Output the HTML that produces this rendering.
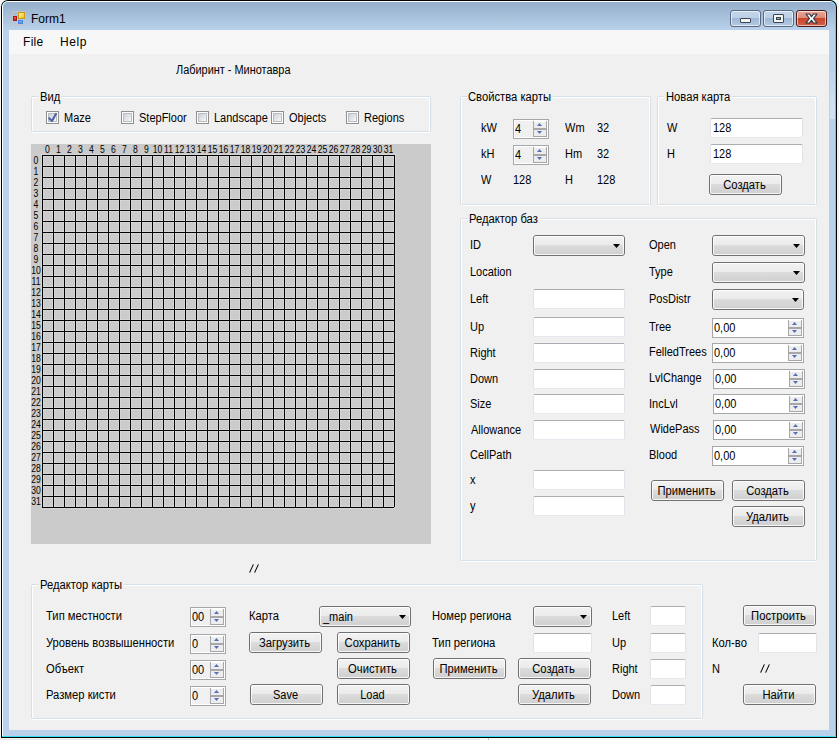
<!DOCTYPE html><html><head><meta charset="utf-8"><style>
html,body{margin:0;padding:0;}
body{width:839px;height:740px;position:relative;overflow:hidden;background:#f4f4f4;font-family:'Liberation Sans',sans-serif;}
.ab{position:absolute;}
.l{position:absolute;font-size:12px;line-height:14px;white-space:pre;color:#000;transform:scaleX(0.9167);transform-origin:0 0;}
.c{text-align:center;transform-origin:50% 0;}
.tb{position:absolute;box-sizing:border-box;background:#fff;border:1px solid #e2e3ea;border-top-color:#abadb3;border-bottom-color:#e3e9ef;border-radius:2px;}
.btn{position:absolute;box-sizing:border-box;border:1px solid #707070;border-radius:3px;background:linear-gradient(#f2f2f2 0%,#ebebeb 46%,#dddddd 46%,#cfcfcf 100%);}
.bi{position:absolute;left:0;top:0;right:0;bottom:0;border:1px solid rgba(255,255,255,0.8);border-radius:2px;}
.nud{position:absolute;box-sizing:border-box;border:1px solid #a5a7ab;box-shadow:inset 0 0 0 1px #fff;}
.spin{position:absolute;box-sizing:border-box;width:14px;height:16px;border:1px solid #a5a7ab;border-top:none;background:linear-gradient(#fff 0,#fff 1px,#ededed 1px,#ededed 7px,#a5a7ab 7px,#a5a7ab 9px,#ededed 9px,#ededed 15px,#fff 15px);}
.cb{position:absolute;box-sizing:border-box;width:13px;height:13px;border:1px solid #8f8f8f;background:#fff;}
.cbi{position:absolute;left:1px;top:1px;width:9px;height:9px;box-sizing:border-box;border:1px solid #b9bdc4;background:linear-gradient(135deg,#cdd1d8,#f7f7f7);}
</style></head><body>

<div class="ab" style="left:1px;top:0;width:836px;height:738px;background:#000;border-radius:7px 7px 0 0"></div>
<div class="ab" style="left:2px;top:1px;width:834px;height:736px;background:#33e0f0;border-radius:6px 6px 0 0"></div>
<div class="ab" style="left:2px;top:1px;width:833px;height:735px;background:#fff;border-radius:6px 6px 0 0"></div>
<div class="ab" style="left:3px;top:2px;width:832px;height:734px;background:#b9d1ea;border-radius:5px 5px 0 0"></div>
<div class="ab" style="left:3px;top:2px;width:832px;height:28px;background:linear-gradient(#94aecb,#b9d1ea);border-radius:5px 5px 0 0"></div>
<div class="ab" style="left:830px;top:72px;width:5px;height:47px;background:linear-gradient(#bcd3ea,#cddff2 60%,#d0e1f3)"></div>
<div class="ab" style="left:0;top:739px;width:839px;height:1px;background:#e6e6e6"></div>
<div class="ab" style="left:480px;top:738px;width:359px;height:2px;background:#fff"></div><div class="ab" style="left:488px;top:738px;width:1px;height:2px;background:#c4c4c4"></div>
<div class="ab" style="left:9px;top:30px;width:820px;height:700px;background:#f0f0f0"></div>
<div class="ab" style="left:9px;top:30px;width:820px;height:24px;background:#f7f7f7"></div>
<div class="ab" style="left:23px;top:35px;font-size:12px;line-height:14px;white-space:pre;letter-spacing:0.3px">File</div>
<div class="ab" style="left:60px;top:35px;font-size:12px;line-height:14px;white-space:pre;letter-spacing:0.6px">Help</div>
<div class="ab" style="left:31px;top:12px;font-size:12px;line-height:14px;white-space:pre;color:#000">Form1</div>
<svg class="ab" style="left:12px;top:11px" width="14" height="14">
<defs><linearGradient id="gy" x1="0" y1="0" x2="1" y2="1"><stop offset="0" stop-color="#fff4b0"/><stop offset="1" stop-color="#f0b818"/></linearGradient>
<linearGradient id="gr" x1="0" y1="0" x2="0" y2="1"><stop offset="0" stop-color="#f07070"/><stop offset="1" stop-color="#c01818"/></linearGradient>
<linearGradient id="gb" x1="0" y1="0" x2="0" y2="1"><stop offset="0" stop-color="#9cc4ff"/><stop offset="1" stop-color="#3a7ee0"/></linearGradient></defs>
<rect x="0.5" y="0.5" width="13" height="13" fill="none" stroke="#c4c4c4"/>
<path d="M5.5 1V13M1 8.5H13" stroke="#d0d0d0" stroke-dasharray="1 1"/>
<rect x="6.5" y="1.5" width="6" height="6" fill="url(#gy)" stroke="#c89a10"/>
<rect x="1.5" y="5.5" width="3" height="4" fill="url(#gr)" stroke="#a81818"/>
<rect x="6.5" y="9.5" width="4" height="3" fill="url(#gb)" stroke="#4a86e0"/>
</svg>
<div class="ab" style="left:730px;top:10px;width:31px;height:17px;box-sizing:border-box;border:1px solid #586a80;border-radius:3px;background:linear-gradient(#c5d6ea 0%,#bccfe6 45%,#9fb8d6 50%,#b5cae2 100%);box-shadow:inset 0 0 0 1px rgba(255,255,255,0.6)"></div>
<div class="ab" style="left:763px;top:10px;width:31px;height:17px;box-sizing:border-box;border:1px solid #586a80;border-radius:3px;background:linear-gradient(#c5d6ea 0%,#bccfe6 45%,#9fb8d6 50%,#b5cae2 100%);box-shadow:inset 0 0 0 1px rgba(255,255,255,0.6)"></div>
<div class="ab" style="left:796px;top:10px;width:31px;height:17px;box-sizing:border-box;border:1px solid #4a1a1a;border-radius:3px;background:linear-gradient(#eaa898 0%,#dc8a78 45%,#c8462a 50%,#d0604a 100%);box-shadow:inset 0 0 0 1px rgba(255,255,255,0.6)"></div>
<div class="ab" style="left:740px;top:18px;width:11px;height:5px;box-sizing:border-box;border:1px solid #3a4656;border-radius:1px;background:#f4f4f0"></div>
<div class="ab" style="left:773px;top:14px;width:11px;height:9px;box-sizing:border-box;border:1px solid #3a4656;border-radius:1px;background:#f4f4f0"></div>
<div class="ab" style="left:776px;top:17px;width:5px;height:3px;box-sizing:border-box;border:1px solid #3a4656;background:#8aa4c4"></div>
<svg class="ab" style="left:805px;top:13px" width="13" height="11"><polygon points="1,1 4.5,1 6.5,3.6 8.5,1 12,1 8.6,5.5 12,10 8.5,10 6.5,7.4 4.5,10 1,10 4.4,5.5" fill="#f8f8f8" stroke="#2e3440" stroke-width="1.2" stroke-linejoin="round"/></svg>
<div class="l" style="left:176px;top:63px;transform:scaleX(0.91);">Лабиринт - Минотавра</div>
<div class="ab" style="left:32px;top:96px;width:398px;height:1px;background:#d5dfe5"></div>
<div class="ab" style="left:32px;top:97px;width:397px;height:1px;background:#fff"></div>
<div class="ab" style="left:31px;top:97px;width:1px;height:34px;background:#d5dfe5"></div>
<div class="ab" style="left:32px;top:97px;width:1px;height:34px;background:#fff"></div>
<div class="ab" style="left:430px;top:97px;width:1px;height:34px;background:#d5dfe5"></div>
<div class="ab" style="left:429px;top:97px;width:1px;height:34px;background:#fff"></div>
<div class="ab" style="left:32px;top:131px;width:398px;height:1px;background:#d5dfe5"></div>
<div class="ab" style="left:32px;top:132px;width:398px;height:1px;background:#fff"></div>
<div class="ab" style="left:38px;top:96px;width:23px;height:2px;background:#f0f0f0"></div>
<div class="l" style="left:40px;top:90px;transform:scaleX(0.935);">Вид</div>
<div class="cb" style="left:46px;top:111px"><div class="cbi"></div></div>
<svg class="ab" style="left:46px;top:111px" width="13" height="13"><path d="M3.2 7.2L6 10L10 2.8" stroke="#4a5fa8" stroke-width="2" fill="none" stroke-linecap="round" stroke-linejoin="round"/></svg>
<div class="l" style="left:64px;top:111px;">Maze</div>
<div class="cb" style="left:121px;top:111px"><div class="cbi"></div></div>
<div class="l" style="left:139px;top:111px;">StepFloor</div>
<div class="cb" style="left:196px;top:111px"><div class="cbi"></div></div>
<div class="l" style="left:214px;top:111px;">Landscape</div>
<div class="cb" style="left:271px;top:111px"><div class="cbi"></div></div>
<div class="l" style="left:289px;top:111px;">Objects</div>
<div class="cb" style="left:346px;top:111px"><div class="cbi"></div></div>
<div class="l" style="left:364px;top:111px;">Regions</div>
<svg class="ab" style="left:31px;top:144px" width="400" height="400"><rect width="400" height="400" fill="#cbcbcb"/><rect x="10" y="10" width="1" height="354" fill="#fff" fill-opacity="0.2"/><rect x="12" y="10" width="1" height="354" fill="#fff" fill-opacity="0.2"/><rect x="10" y="10" width="354" height="1" fill="#fff" fill-opacity="0.2"/><rect x="10" y="12" width="354" height="1" fill="#fff" fill-opacity="0.2"/><rect x="21" y="10" width="1" height="354" fill="#fff" fill-opacity="0.2"/><rect x="23" y="10" width="1" height="354" fill="#fff" fill-opacity="0.2"/><rect x="10" y="21" width="354" height="1" fill="#fff" fill-opacity="0.2"/><rect x="10" y="23" width="354" height="1" fill="#fff" fill-opacity="0.2"/><rect x="32" y="10" width="1" height="354" fill="#fff" fill-opacity="0.2"/><rect x="34" y="10" width="1" height="354" fill="#fff" fill-opacity="0.2"/><rect x="10" y="32" width="354" height="1" fill="#fff" fill-opacity="0.2"/><rect x="10" y="34" width="354" height="1" fill="#fff" fill-opacity="0.2"/><rect x="43" y="10" width="1" height="354" fill="#fff" fill-opacity="0.2"/><rect x="45" y="10" width="1" height="354" fill="#fff" fill-opacity="0.2"/><rect x="10" y="43" width="354" height="1" fill="#fff" fill-opacity="0.2"/><rect x="10" y="45" width="354" height="1" fill="#fff" fill-opacity="0.2"/><rect x="54" y="10" width="1" height="354" fill="#fff" fill-opacity="0.2"/><rect x="56" y="10" width="1" height="354" fill="#fff" fill-opacity="0.2"/><rect x="10" y="54" width="354" height="1" fill="#fff" fill-opacity="0.2"/><rect x="10" y="56" width="354" height="1" fill="#fff" fill-opacity="0.2"/><rect x="65" y="10" width="1" height="354" fill="#fff" fill-opacity="0.2"/><rect x="67" y="10" width="1" height="354" fill="#fff" fill-opacity="0.2"/><rect x="10" y="65" width="354" height="1" fill="#fff" fill-opacity="0.2"/><rect x="10" y="67" width="354" height="1" fill="#fff" fill-opacity="0.2"/><rect x="76" y="10" width="1" height="354" fill="#fff" fill-opacity="0.2"/><rect x="78" y="10" width="1" height="354" fill="#fff" fill-opacity="0.2"/><rect x="10" y="76" width="354" height="1" fill="#fff" fill-opacity="0.2"/><rect x="10" y="78" width="354" height="1" fill="#fff" fill-opacity="0.2"/><rect x="87" y="10" width="1" height="354" fill="#fff" fill-opacity="0.2"/><rect x="89" y="10" width="1" height="354" fill="#fff" fill-opacity="0.2"/><rect x="10" y="87" width="354" height="1" fill="#fff" fill-opacity="0.2"/><rect x="10" y="89" width="354" height="1" fill="#fff" fill-opacity="0.2"/><rect x="98" y="10" width="1" height="354" fill="#fff" fill-opacity="0.2"/><rect x="100" y="10" width="1" height="354" fill="#fff" fill-opacity="0.2"/><rect x="10" y="98" width="354" height="1" fill="#fff" fill-opacity="0.2"/><rect x="10" y="100" width="354" height="1" fill="#fff" fill-opacity="0.2"/><rect x="109" y="10" width="1" height="354" fill="#fff" fill-opacity="0.2"/><rect x="111" y="10" width="1" height="354" fill="#fff" fill-opacity="0.2"/><rect x="10" y="109" width="354" height="1" fill="#fff" fill-opacity="0.2"/><rect x="10" y="111" width="354" height="1" fill="#fff" fill-opacity="0.2"/><rect x="120" y="10" width="1" height="354" fill="#fff" fill-opacity="0.2"/><rect x="122" y="10" width="1" height="354" fill="#fff" fill-opacity="0.2"/><rect x="10" y="120" width="354" height="1" fill="#fff" fill-opacity="0.2"/><rect x="10" y="122" width="354" height="1" fill="#fff" fill-opacity="0.2"/><rect x="131" y="10" width="1" height="354" fill="#fff" fill-opacity="0.2"/><rect x="133" y="10" width="1" height="354" fill="#fff" fill-opacity="0.2"/><rect x="10" y="131" width="354" height="1" fill="#fff" fill-opacity="0.2"/><rect x="10" y="133" width="354" height="1" fill="#fff" fill-opacity="0.2"/><rect x="142" y="10" width="1" height="354" fill="#fff" fill-opacity="0.2"/><rect x="144" y="10" width="1" height="354" fill="#fff" fill-opacity="0.2"/><rect x="10" y="142" width="354" height="1" fill="#fff" fill-opacity="0.2"/><rect x="10" y="144" width="354" height="1" fill="#fff" fill-opacity="0.2"/><rect x="153" y="10" width="1" height="354" fill="#fff" fill-opacity="0.2"/><rect x="155" y="10" width="1" height="354" fill="#fff" fill-opacity="0.2"/><rect x="10" y="153" width="354" height="1" fill="#fff" fill-opacity="0.2"/><rect x="10" y="155" width="354" height="1" fill="#fff" fill-opacity="0.2"/><rect x="164" y="10" width="1" height="354" fill="#fff" fill-opacity="0.2"/><rect x="166" y="10" width="1" height="354" fill="#fff" fill-opacity="0.2"/><rect x="10" y="164" width="354" height="1" fill="#fff" fill-opacity="0.2"/><rect x="10" y="166" width="354" height="1" fill="#fff" fill-opacity="0.2"/><rect x="175" y="10" width="1" height="354" fill="#fff" fill-opacity="0.2"/><rect x="177" y="10" width="1" height="354" fill="#fff" fill-opacity="0.2"/><rect x="10" y="175" width="354" height="1" fill="#fff" fill-opacity="0.2"/><rect x="10" y="177" width="354" height="1" fill="#fff" fill-opacity="0.2"/><rect x="186" y="10" width="1" height="354" fill="#fff" fill-opacity="0.2"/><rect x="188" y="10" width="1" height="354" fill="#fff" fill-opacity="0.2"/><rect x="10" y="186" width="354" height="1" fill="#fff" fill-opacity="0.2"/><rect x="10" y="188" width="354" height="1" fill="#fff" fill-opacity="0.2"/><rect x="197" y="10" width="1" height="354" fill="#fff" fill-opacity="0.2"/><rect x="199" y="10" width="1" height="354" fill="#fff" fill-opacity="0.2"/><rect x="10" y="197" width="354" height="1" fill="#fff" fill-opacity="0.2"/><rect x="10" y="199" width="354" height="1" fill="#fff" fill-opacity="0.2"/><rect x="208" y="10" width="1" height="354" fill="#fff" fill-opacity="0.2"/><rect x="210" y="10" width="1" height="354" fill="#fff" fill-opacity="0.2"/><rect x="10" y="208" width="354" height="1" fill="#fff" fill-opacity="0.2"/><rect x="10" y="210" width="354" height="1" fill="#fff" fill-opacity="0.2"/><rect x="219" y="10" width="1" height="354" fill="#fff" fill-opacity="0.2"/><rect x="221" y="10" width="1" height="354" fill="#fff" fill-opacity="0.2"/><rect x="10" y="219" width="354" height="1" fill="#fff" fill-opacity="0.2"/><rect x="10" y="221" width="354" height="1" fill="#fff" fill-opacity="0.2"/><rect x="230" y="10" width="1" height="354" fill="#fff" fill-opacity="0.2"/><rect x="232" y="10" width="1" height="354" fill="#fff" fill-opacity="0.2"/><rect x="10" y="230" width="354" height="1" fill="#fff" fill-opacity="0.2"/><rect x="10" y="232" width="354" height="1" fill="#fff" fill-opacity="0.2"/><rect x="241" y="10" width="1" height="354" fill="#fff" fill-opacity="0.2"/><rect x="243" y="10" width="1" height="354" fill="#fff" fill-opacity="0.2"/><rect x="10" y="241" width="354" height="1" fill="#fff" fill-opacity="0.2"/><rect x="10" y="243" width="354" height="1" fill="#fff" fill-opacity="0.2"/><rect x="252" y="10" width="1" height="354" fill="#fff" fill-opacity="0.2"/><rect x="254" y="10" width="1" height="354" fill="#fff" fill-opacity="0.2"/><rect x="10" y="252" width="354" height="1" fill="#fff" fill-opacity="0.2"/><rect x="10" y="254" width="354" height="1" fill="#fff" fill-opacity="0.2"/><rect x="263" y="10" width="1" height="354" fill="#fff" fill-opacity="0.2"/><rect x="265" y="10" width="1" height="354" fill="#fff" fill-opacity="0.2"/><rect x="10" y="263" width="354" height="1" fill="#fff" fill-opacity="0.2"/><rect x="10" y="265" width="354" height="1" fill="#fff" fill-opacity="0.2"/><rect x="274" y="10" width="1" height="354" fill="#fff" fill-opacity="0.2"/><rect x="276" y="10" width="1" height="354" fill="#fff" fill-opacity="0.2"/><rect x="10" y="274" width="354" height="1" fill="#fff" fill-opacity="0.2"/><rect x="10" y="276" width="354" height="1" fill="#fff" fill-opacity="0.2"/><rect x="285" y="10" width="1" height="354" fill="#fff" fill-opacity="0.2"/><rect x="287" y="10" width="1" height="354" fill="#fff" fill-opacity="0.2"/><rect x="10" y="285" width="354" height="1" fill="#fff" fill-opacity="0.2"/><rect x="10" y="287" width="354" height="1" fill="#fff" fill-opacity="0.2"/><rect x="296" y="10" width="1" height="354" fill="#fff" fill-opacity="0.2"/><rect x="298" y="10" width="1" height="354" fill="#fff" fill-opacity="0.2"/><rect x="10" y="296" width="354" height="1" fill="#fff" fill-opacity="0.2"/><rect x="10" y="298" width="354" height="1" fill="#fff" fill-opacity="0.2"/><rect x="307" y="10" width="1" height="354" fill="#fff" fill-opacity="0.2"/><rect x="309" y="10" width="1" height="354" fill="#fff" fill-opacity="0.2"/><rect x="10" y="307" width="354" height="1" fill="#fff" fill-opacity="0.2"/><rect x="10" y="309" width="354" height="1" fill="#fff" fill-opacity="0.2"/><rect x="318" y="10" width="1" height="354" fill="#fff" fill-opacity="0.2"/><rect x="320" y="10" width="1" height="354" fill="#fff" fill-opacity="0.2"/><rect x="10" y="318" width="354" height="1" fill="#fff" fill-opacity="0.2"/><rect x="10" y="320" width="354" height="1" fill="#fff" fill-opacity="0.2"/><rect x="329" y="10" width="1" height="354" fill="#fff" fill-opacity="0.2"/><rect x="331" y="10" width="1" height="354" fill="#fff" fill-opacity="0.2"/><rect x="10" y="329" width="354" height="1" fill="#fff" fill-opacity="0.2"/><rect x="10" y="331" width="354" height="1" fill="#fff" fill-opacity="0.2"/><rect x="340" y="10" width="1" height="354" fill="#fff" fill-opacity="0.2"/><rect x="342" y="10" width="1" height="354" fill="#fff" fill-opacity="0.2"/><rect x="10" y="340" width="354" height="1" fill="#fff" fill-opacity="0.2"/><rect x="10" y="342" width="354" height="1" fill="#fff" fill-opacity="0.2"/><rect x="351" y="10" width="1" height="354" fill="#fff" fill-opacity="0.2"/><rect x="353" y="10" width="1" height="354" fill="#fff" fill-opacity="0.2"/><rect x="10" y="351" width="354" height="1" fill="#fff" fill-opacity="0.2"/><rect x="10" y="353" width="354" height="1" fill="#fff" fill-opacity="0.2"/><rect x="362" y="10" width="1" height="354" fill="#fff" fill-opacity="0.2"/><rect x="364" y="10" width="1" height="354" fill="#fff" fill-opacity="0.2"/><rect x="10" y="362" width="354" height="1" fill="#fff" fill-opacity="0.2"/><rect x="10" y="364" width="354" height="1" fill="#fff" fill-opacity="0.2"/><rect x="11" y="11" width="1" height="352" fill="#000"/><rect x="11" y="11" width="352" height="1" fill="#000"/><rect x="22" y="11" width="1" height="352" fill="#000"/><rect x="11" y="22" width="352" height="1" fill="#000"/><rect x="33" y="11" width="1" height="352" fill="#000"/><rect x="11" y="33" width="352" height="1" fill="#000"/><rect x="44" y="11" width="1" height="352" fill="#000"/><rect x="11" y="44" width="352" height="1" fill="#000"/><rect x="55" y="11" width="1" height="352" fill="#000"/><rect x="11" y="55" width="352" height="1" fill="#000"/><rect x="66" y="11" width="1" height="352" fill="#000"/><rect x="11" y="66" width="352" height="1" fill="#000"/><rect x="77" y="11" width="1" height="352" fill="#000"/><rect x="11" y="77" width="352" height="1" fill="#000"/><rect x="88" y="11" width="1" height="352" fill="#000"/><rect x="11" y="88" width="352" height="1" fill="#000"/><rect x="99" y="11" width="1" height="352" fill="#000"/><rect x="11" y="99" width="352" height="1" fill="#000"/><rect x="110" y="11" width="1" height="352" fill="#000"/><rect x="11" y="110" width="352" height="1" fill="#000"/><rect x="121" y="11" width="1" height="352" fill="#000"/><rect x="11" y="121" width="352" height="1" fill="#000"/><rect x="132" y="11" width="1" height="352" fill="#000"/><rect x="11" y="132" width="352" height="1" fill="#000"/><rect x="143" y="11" width="1" height="352" fill="#000"/><rect x="11" y="143" width="352" height="1" fill="#000"/><rect x="154" y="11" width="1" height="352" fill="#000"/><rect x="11" y="154" width="352" height="1" fill="#000"/><rect x="165" y="11" width="1" height="352" fill="#000"/><rect x="11" y="165" width="352" height="1" fill="#000"/><rect x="176" y="11" width="1" height="352" fill="#000"/><rect x="11" y="176" width="352" height="1" fill="#000"/><rect x="187" y="11" width="1" height="352" fill="#000"/><rect x="11" y="187" width="352" height="1" fill="#000"/><rect x="198" y="11" width="1" height="352" fill="#000"/><rect x="11" y="198" width="352" height="1" fill="#000"/><rect x="209" y="11" width="1" height="352" fill="#000"/><rect x="11" y="209" width="352" height="1" fill="#000"/><rect x="220" y="11" width="1" height="352" fill="#000"/><rect x="11" y="220" width="352" height="1" fill="#000"/><rect x="231" y="11" width="1" height="352" fill="#000"/><rect x="11" y="231" width="352" height="1" fill="#000"/><rect x="242" y="11" width="1" height="352" fill="#000"/><rect x="11" y="242" width="352" height="1" fill="#000"/><rect x="253" y="11" width="1" height="352" fill="#000"/><rect x="11" y="253" width="352" height="1" fill="#000"/><rect x="264" y="11" width="1" height="352" fill="#000"/><rect x="11" y="264" width="352" height="1" fill="#000"/><rect x="275" y="11" width="1" height="352" fill="#000"/><rect x="11" y="275" width="352" height="1" fill="#000"/><rect x="286" y="11" width="1" height="352" fill="#000"/><rect x="11" y="286" width="352" height="1" fill="#000"/><rect x="297" y="11" width="1" height="352" fill="#000"/><rect x="11" y="297" width="352" height="1" fill="#000"/><rect x="308" y="11" width="1" height="352" fill="#000"/><rect x="11" y="308" width="352" height="1" fill="#000"/><rect x="319" y="11" width="1" height="352" fill="#000"/><rect x="11" y="319" width="352" height="1" fill="#000"/><rect x="330" y="11" width="1" height="352" fill="#000"/><rect x="11" y="330" width="352" height="1" fill="#000"/><rect x="341" y="11" width="1" height="352" fill="#000"/><rect x="11" y="341" width="352" height="1" fill="#000"/><rect x="352" y="11" width="1" height="352" fill="#000"/><rect x="11" y="352" width="352" height="1" fill="#000"/><rect x="363" y="11" width="1" height="352" fill="#000"/><rect x="11" y="363" width="352" height="1" fill="#000"/></svg>
<div class="ab" style="left:36px;top:144px;width:23px;text-align:center;font-size:10px;line-height:11px;transform:scaleX(0.86);transform-origin:50% 0">0</div>
<div class="ab" style="left:47px;top:144px;width:23px;text-align:center;font-size:10px;line-height:11px;transform:scaleX(0.86);transform-origin:50% 0">1</div>
<div class="ab" style="left:58px;top:144px;width:23px;text-align:center;font-size:10px;line-height:11px;transform:scaleX(0.86);transform-origin:50% 0">2</div>
<div class="ab" style="left:69px;top:144px;width:23px;text-align:center;font-size:10px;line-height:11px;transform:scaleX(0.86);transform-origin:50% 0">3</div>
<div class="ab" style="left:80px;top:144px;width:23px;text-align:center;font-size:10px;line-height:11px;transform:scaleX(0.86);transform-origin:50% 0">4</div>
<div class="ab" style="left:91px;top:144px;width:23px;text-align:center;font-size:10px;line-height:11px;transform:scaleX(0.86);transform-origin:50% 0">5</div>
<div class="ab" style="left:102px;top:144px;width:23px;text-align:center;font-size:10px;line-height:11px;transform:scaleX(0.86);transform-origin:50% 0">6</div>
<div class="ab" style="left:113px;top:144px;width:23px;text-align:center;font-size:10px;line-height:11px;transform:scaleX(0.86);transform-origin:50% 0">7</div>
<div class="ab" style="left:124px;top:144px;width:23px;text-align:center;font-size:10px;line-height:11px;transform:scaleX(0.86);transform-origin:50% 0">8</div>
<div class="ab" style="left:135px;top:144px;width:23px;text-align:center;font-size:10px;line-height:11px;transform:scaleX(0.86);transform-origin:50% 0">9</div>
<div class="ab" style="left:146px;top:144px;width:23px;text-align:center;font-size:10px;line-height:11px;transform:scaleX(0.86);transform-origin:50% 0">10</div>
<div class="ab" style="left:157px;top:144px;width:23px;text-align:center;font-size:10px;line-height:11px;transform:scaleX(0.86);transform-origin:50% 0">11</div>
<div class="ab" style="left:168px;top:144px;width:23px;text-align:center;font-size:10px;line-height:11px;transform:scaleX(0.86);transform-origin:50% 0">12</div>
<div class="ab" style="left:179px;top:144px;width:23px;text-align:center;font-size:10px;line-height:11px;transform:scaleX(0.86);transform-origin:50% 0">13</div>
<div class="ab" style="left:190px;top:144px;width:23px;text-align:center;font-size:10px;line-height:11px;transform:scaleX(0.86);transform-origin:50% 0">14</div>
<div class="ab" style="left:201px;top:144px;width:23px;text-align:center;font-size:10px;line-height:11px;transform:scaleX(0.86);transform-origin:50% 0">15</div>
<div class="ab" style="left:212px;top:144px;width:23px;text-align:center;font-size:10px;line-height:11px;transform:scaleX(0.86);transform-origin:50% 0">16</div>
<div class="ab" style="left:223px;top:144px;width:23px;text-align:center;font-size:10px;line-height:11px;transform:scaleX(0.86);transform-origin:50% 0">17</div>
<div class="ab" style="left:234px;top:144px;width:23px;text-align:center;font-size:10px;line-height:11px;transform:scaleX(0.86);transform-origin:50% 0">18</div>
<div class="ab" style="left:245px;top:144px;width:23px;text-align:center;font-size:10px;line-height:11px;transform:scaleX(0.86);transform-origin:50% 0">19</div>
<div class="ab" style="left:256px;top:144px;width:23px;text-align:center;font-size:10px;line-height:11px;transform:scaleX(0.86);transform-origin:50% 0">20</div>
<div class="ab" style="left:267px;top:144px;width:23px;text-align:center;font-size:10px;line-height:11px;transform:scaleX(0.86);transform-origin:50% 0">21</div>
<div class="ab" style="left:278px;top:144px;width:23px;text-align:center;font-size:10px;line-height:11px;transform:scaleX(0.86);transform-origin:50% 0">22</div>
<div class="ab" style="left:289px;top:144px;width:23px;text-align:center;font-size:10px;line-height:11px;transform:scaleX(0.86);transform-origin:50% 0">23</div>
<div class="ab" style="left:300px;top:144px;width:23px;text-align:center;font-size:10px;line-height:11px;transform:scaleX(0.86);transform-origin:50% 0">24</div>
<div class="ab" style="left:311px;top:144px;width:23px;text-align:center;font-size:10px;line-height:11px;transform:scaleX(0.86);transform-origin:50% 0">25</div>
<div class="ab" style="left:322px;top:144px;width:23px;text-align:center;font-size:10px;line-height:11px;transform:scaleX(0.86);transform-origin:50% 0">26</div>
<div class="ab" style="left:333px;top:144px;width:23px;text-align:center;font-size:10px;line-height:11px;transform:scaleX(0.86);transform-origin:50% 0">27</div>
<div class="ab" style="left:344px;top:144px;width:23px;text-align:center;font-size:10px;line-height:11px;transform:scaleX(0.86);transform-origin:50% 0">28</div>
<div class="ab" style="left:355px;top:144px;width:23px;text-align:center;font-size:10px;line-height:11px;transform:scaleX(0.86);transform-origin:50% 0">29</div>
<div class="ab" style="left:366px;top:144px;width:23px;text-align:center;font-size:10px;line-height:11px;transform:scaleX(0.86);transform-origin:50% 0">30</div>
<div class="ab" style="left:377px;top:144px;width:23px;text-align:center;font-size:10px;line-height:11px;transform:scaleX(0.86);transform-origin:50% 0">31</div>
<div class="ab" style="left:24px;top:155px;width:24px;text-align:center;font-size:10px;line-height:11px;transform:scaleX(0.86);transform-origin:50% 0">0</div>
<div class="ab" style="left:24px;top:166px;width:24px;text-align:center;font-size:10px;line-height:11px;transform:scaleX(0.86);transform-origin:50% 0">1</div>
<div class="ab" style="left:24px;top:177px;width:24px;text-align:center;font-size:10px;line-height:11px;transform:scaleX(0.86);transform-origin:50% 0">2</div>
<div class="ab" style="left:24px;top:188px;width:24px;text-align:center;font-size:10px;line-height:11px;transform:scaleX(0.86);transform-origin:50% 0">3</div>
<div class="ab" style="left:24px;top:199px;width:24px;text-align:center;font-size:10px;line-height:11px;transform:scaleX(0.86);transform-origin:50% 0">4</div>
<div class="ab" style="left:24px;top:210px;width:24px;text-align:center;font-size:10px;line-height:11px;transform:scaleX(0.86);transform-origin:50% 0">5</div>
<div class="ab" style="left:24px;top:221px;width:24px;text-align:center;font-size:10px;line-height:11px;transform:scaleX(0.86);transform-origin:50% 0">6</div>
<div class="ab" style="left:24px;top:232px;width:24px;text-align:center;font-size:10px;line-height:11px;transform:scaleX(0.86);transform-origin:50% 0">7</div>
<div class="ab" style="left:24px;top:243px;width:24px;text-align:center;font-size:10px;line-height:11px;transform:scaleX(0.86);transform-origin:50% 0">8</div>
<div class="ab" style="left:24px;top:254px;width:24px;text-align:center;font-size:10px;line-height:11px;transform:scaleX(0.86);transform-origin:50% 0">9</div>
<div class="ab" style="left:24px;top:265px;width:24px;text-align:center;font-size:10px;line-height:11px;transform:scaleX(0.86);transform-origin:50% 0">10</div>
<div class="ab" style="left:24px;top:276px;width:24px;text-align:center;font-size:10px;line-height:11px;transform:scaleX(0.86);transform-origin:50% 0">11</div>
<div class="ab" style="left:24px;top:287px;width:24px;text-align:center;font-size:10px;line-height:11px;transform:scaleX(0.86);transform-origin:50% 0">12</div>
<div class="ab" style="left:24px;top:298px;width:24px;text-align:center;font-size:10px;line-height:11px;transform:scaleX(0.86);transform-origin:50% 0">13</div>
<div class="ab" style="left:24px;top:309px;width:24px;text-align:center;font-size:10px;line-height:11px;transform:scaleX(0.86);transform-origin:50% 0">14</div>
<div class="ab" style="left:24px;top:320px;width:24px;text-align:center;font-size:10px;line-height:11px;transform:scaleX(0.86);transform-origin:50% 0">15</div>
<div class="ab" style="left:24px;top:331px;width:24px;text-align:center;font-size:10px;line-height:11px;transform:scaleX(0.86);transform-origin:50% 0">16</div>
<div class="ab" style="left:24px;top:342px;width:24px;text-align:center;font-size:10px;line-height:11px;transform:scaleX(0.86);transform-origin:50% 0">17</div>
<div class="ab" style="left:24px;top:353px;width:24px;text-align:center;font-size:10px;line-height:11px;transform:scaleX(0.86);transform-origin:50% 0">18</div>
<div class="ab" style="left:24px;top:364px;width:24px;text-align:center;font-size:10px;line-height:11px;transform:scaleX(0.86);transform-origin:50% 0">19</div>
<div class="ab" style="left:24px;top:375px;width:24px;text-align:center;font-size:10px;line-height:11px;transform:scaleX(0.86);transform-origin:50% 0">20</div>
<div class="ab" style="left:24px;top:386px;width:24px;text-align:center;font-size:10px;line-height:11px;transform:scaleX(0.86);transform-origin:50% 0">21</div>
<div class="ab" style="left:24px;top:397px;width:24px;text-align:center;font-size:10px;line-height:11px;transform:scaleX(0.86);transform-origin:50% 0">22</div>
<div class="ab" style="left:24px;top:408px;width:24px;text-align:center;font-size:10px;line-height:11px;transform:scaleX(0.86);transform-origin:50% 0">23</div>
<div class="ab" style="left:24px;top:419px;width:24px;text-align:center;font-size:10px;line-height:11px;transform:scaleX(0.86);transform-origin:50% 0">24</div>
<div class="ab" style="left:24px;top:430px;width:24px;text-align:center;font-size:10px;line-height:11px;transform:scaleX(0.86);transform-origin:50% 0">25</div>
<div class="ab" style="left:24px;top:441px;width:24px;text-align:center;font-size:10px;line-height:11px;transform:scaleX(0.86);transform-origin:50% 0">26</div>
<div class="ab" style="left:24px;top:452px;width:24px;text-align:center;font-size:10px;line-height:11px;transform:scaleX(0.86);transform-origin:50% 0">27</div>
<div class="ab" style="left:24px;top:463px;width:24px;text-align:center;font-size:10px;line-height:11px;transform:scaleX(0.86);transform-origin:50% 0">28</div>
<div class="ab" style="left:24px;top:474px;width:24px;text-align:center;font-size:10px;line-height:11px;transform:scaleX(0.86);transform-origin:50% 0">29</div>
<div class="ab" style="left:24px;top:485px;width:24px;text-align:center;font-size:10px;line-height:11px;transform:scaleX(0.86);transform-origin:50% 0">30</div>
<div class="ab" style="left:24px;top:496px;width:24px;text-align:center;font-size:10px;line-height:11px;transform:scaleX(0.86);transform-origin:50% 0">31</div>
<div class="ab" style="left:461px;top:96px;width:189px;height:1px;background:#d5dfe5"></div>
<div class="ab" style="left:461px;top:97px;width:188px;height:1px;background:#fff"></div>
<div class="ab" style="left:460px;top:97px;width:1px;height:107px;background:#d5dfe5"></div>
<div class="ab" style="left:461px;top:97px;width:1px;height:107px;background:#fff"></div>
<div class="ab" style="left:650px;top:97px;width:1px;height:107px;background:#d5dfe5"></div>
<div class="ab" style="left:649px;top:97px;width:1px;height:107px;background:#fff"></div>
<div class="ab" style="left:461px;top:204px;width:189px;height:1px;background:#d5dfe5"></div>
<div class="ab" style="left:461px;top:205px;width:189px;height:1px;background:#fff"></div>
<div class="ab" style="left:467px;top:96px;width:86px;height:2px;background:#f0f0f0"></div>
<div class="l" style="left:468px;top:90px;transform:scaleX(0.935);">Свойства карты</div>
<div class="l" style="left:481px;top:121px;">kW</div>
<div class="nud" style="left:513px;top:119px;width:36px;height:20px;background:#f0f0f0"></div>
<div class="spin" style="left:533px;top:121px"></div>
<svg class="ab" style="left:537px;top:123px" width="5" height="3"><path d="M2.5 0L5 3H0Z" fill="#5470b8"/></svg>
<svg class="ab" style="left:537px;top:131px" width="5" height="3"><path d="M0 0H5L2.5 3Z" fill="#5470b8"/></svg>
<div class="l" style="left:515px;top:122px;">4</div>
<div class="l" style="left:481px;top:147px;">kH</div>
<div class="nud" style="left:513px;top:145px;width:36px;height:20px;background:#f0f0f0"></div>
<div class="spin" style="left:533px;top:147px"></div>
<svg class="ab" style="left:537px;top:149px" width="5" height="3"><path d="M2.5 0L5 3H0Z" fill="#5470b8"/></svg>
<svg class="ab" style="left:537px;top:157px" width="5" height="3"><path d="M0 0H5L2.5 3Z" fill="#5470b8"/></svg>
<div class="l" style="left:515px;top:148px;">4</div>
<div class="l" style="left:481px;top:173px;">W</div>
<div class="l" style="left:513px;top:173px;">128</div>
<div class="l" style="left:565px;top:121px;">Wm</div>
<div class="l" style="left:597px;top:121px;">32</div>
<div class="l" style="left:565px;top:147px;">Hm</div>
<div class="l" style="left:597px;top:147px;">32</div>
<div class="l" style="left:565px;top:173px;">H</div>
<div class="l" style="left:597px;top:173px;">128</div>
<div class="ab" style="left:658px;top:96px;width:158px;height:1px;background:#d5dfe5"></div>
<div class="ab" style="left:658px;top:97px;width:157px;height:1px;background:#fff"></div>
<div class="ab" style="left:657px;top:97px;width:1px;height:107px;background:#d5dfe5"></div>
<div class="ab" style="left:658px;top:97px;width:1px;height:107px;background:#fff"></div>
<div class="ab" style="left:816px;top:97px;width:1px;height:107px;background:#d5dfe5"></div>
<div class="ab" style="left:815px;top:97px;width:1px;height:107px;background:#fff"></div>
<div class="ab" style="left:658px;top:204px;width:158px;height:1px;background:#d5dfe5"></div>
<div class="ab" style="left:658px;top:205px;width:158px;height:1px;background:#fff"></div>
<div class="ab" style="left:664px;top:96px;width:68px;height:2px;background:#f0f0f0"></div>
<div class="l" style="left:666px;top:90px;transform:scaleX(0.935);">Новая карта</div>
<div class="l" style="left:667px;top:121px;">W</div>
<div class="tb" style="left:710px;top:118px;width:93px;height:20px"></div>
<div class="l" style="left:713px;top:121px;">128</div>
<div class="l" style="left:667px;top:147px;">H</div>
<div class="tb" style="left:710px;top:144px;width:93px;height:20px"></div>
<div class="l" style="left:713px;top:147px;">128</div>
<div class="btn" style="left:709px;top:174px;width:73px;height:21px"><div class="bi"></div></div>
<div class="l c" style="left:708px;top:178px;width:73px;transform:scaleX(0.935);">Создать</div>
<div class="ab" style="left:461px;top:218px;width:355px;height:1px;background:#d5dfe5"></div>
<div class="ab" style="left:461px;top:219px;width:354px;height:1px;background:#fff"></div>
<div class="ab" style="left:460px;top:219px;width:1px;height:341px;background:#d5dfe5"></div>
<div class="ab" style="left:461px;top:219px;width:1px;height:341px;background:#fff"></div>
<div class="ab" style="left:816px;top:219px;width:1px;height:341px;background:#d5dfe5"></div>
<div class="ab" style="left:815px;top:219px;width:1px;height:341px;background:#fff"></div>
<div class="ab" style="left:461px;top:560px;width:355px;height:1px;background:#d5dfe5"></div>
<div class="ab" style="left:461px;top:561px;width:355px;height:1px;background:#fff"></div>
<div class="ab" style="left:467px;top:218px;width:73px;height:2px;background:#f0f0f0"></div>
<div class="l" style="left:469px;top:212px;transform:scaleX(0.935);">Редактор баз</div>
<div class="l" style="left:470px;top:238px;">ID</div>
<div class="l" style="left:470px;top:265px;">Location</div>
<div class="l" style="left:470px;top:292px;">Left</div>
<div class="l" style="left:470px;top:320px;">Up</div>
<div class="l" style="left:470px;top:346px;">Right</div>
<div class="l" style="left:470px;top:372px;">Down</div>
<div class="l" style="left:470px;top:397px;">Size</div>
<div class="l" style="left:471px;top:423px;">Allowance</div>
<div class="l" style="left:470px;top:448px;">CellPath</div>
<div class="l" style="left:470px;top:473px;">x</div>
<div class="l" style="left:470px;top:499px;">y</div>
<div class="btn" style="left:533px;top:235px;width:92px;height:21px"><div class="bi"></div></div>
<svg class="ab" style="left:613px;top:244px" width="7" height="4"><path d="M0 0H7L3.5 4Z" fill="#000"/></svg>
<div class="tb" style="left:533px;top:289px;width:92px;height:20px"></div>
<div class="tb" style="left:533px;top:317px;width:92px;height:20px"></div>
<div class="tb" style="left:533px;top:343px;width:92px;height:20px"></div>
<div class="tb" style="left:533px;top:369px;width:92px;height:20px"></div>
<div class="tb" style="left:533px;top:394px;width:92px;height:20px"></div>
<div class="tb" style="left:533px;top:420px;width:92px;height:20px"></div>
<div class="tb" style="left:533px;top:470px;width:92px;height:20px"></div>
<div class="tb" style="left:533px;top:496px;width:92px;height:20px"></div>
<div class="l" style="left:649px;top:238px;">Open</div>
<div class="l" style="left:649px;top:265px;">Type</div>
<div class="l" style="left:649px;top:292px;">PosDistr</div>
<div class="l" style="left:649px;top:320px;">Tree</div>
<div class="l" style="left:649px;top:345px;">FelledTrees</div>
<div class="l" style="left:649px;top:371px;">LvlChange</div>
<div class="l" style="left:649px;top:397px;">IncLvl</div>
<div class="l" style="left:650px;top:422px;">WidePass</div>
<div class="l" style="left:649px;top:448px;">Blood</div>
<div class="btn" style="left:712px;top:235px;width:93px;height:21px"><div class="bi"></div></div>
<svg class="ab" style="left:793px;top:244px" width="7" height="4"><path d="M0 0H7L3.5 4Z" fill="#000"/></svg>
<div class="btn" style="left:712px;top:262px;width:93px;height:21px"><div class="bi"></div></div>
<svg class="ab" style="left:793px;top:271px" width="7" height="4"><path d="M0 0H7L3.5 4Z" fill="#000"/></svg>
<div class="btn" style="left:712px;top:289px;width:92px;height:21px"><div class="bi"></div></div>
<svg class="ab" style="left:792px;top:298px" width="7" height="4"><path d="M0 0H7L3.5 4Z" fill="#000"/></svg>
<div class="nud" style="left:712px;top:318px;width:92px;height:20px;background:#fff"></div>
<div class="spin" style="left:788px;top:320px"></div>
<svg class="ab" style="left:792px;top:322px" width="5" height="3"><path d="M2.5 0L5 3H0Z" fill="#5470b8"/></svg>
<svg class="ab" style="left:792px;top:330px" width="5" height="3"><path d="M0 0H5L2.5 3Z" fill="#5470b8"/></svg>
<div class="l" style="left:714px;top:321px;">0,00</div>
<div class="nud" style="left:712px;top:343px;width:92px;height:20px;background:#fff"></div>
<div class="spin" style="left:788px;top:345px"></div>
<svg class="ab" style="left:792px;top:347px" width="5" height="3"><path d="M2.5 0L5 3H0Z" fill="#5470b8"/></svg>
<svg class="ab" style="left:792px;top:355px" width="5" height="3"><path d="M0 0H5L2.5 3Z" fill="#5470b8"/></svg>
<div class="l" style="left:714px;top:346px;">0,00</div>
<div class="nud" style="left:713px;top:369px;width:92px;height:20px;background:#fff"></div>
<div class="spin" style="left:789px;top:371px"></div>
<svg class="ab" style="left:793px;top:373px" width="5" height="3"><path d="M2.5 0L5 3H0Z" fill="#5470b8"/></svg>
<svg class="ab" style="left:793px;top:381px" width="5" height="3"><path d="M0 0H5L2.5 3Z" fill="#5470b8"/></svg>
<div class="l" style="left:715px;top:372px;">0,00</div>
<div class="nud" style="left:713px;top:394px;width:92px;height:20px;background:#fff"></div>
<div class="spin" style="left:789px;top:396px"></div>
<svg class="ab" style="left:793px;top:398px" width="5" height="3"><path d="M2.5 0L5 3H0Z" fill="#5470b8"/></svg>
<svg class="ab" style="left:793px;top:406px" width="5" height="3"><path d="M0 0H5L2.5 3Z" fill="#5470b8"/></svg>
<div class="l" style="left:715px;top:397px;">0,00</div>
<div class="nud" style="left:713px;top:420px;width:92px;height:20px;background:#fff"></div>
<div class="spin" style="left:789px;top:422px"></div>
<svg class="ab" style="left:793px;top:424px" width="5" height="3"><path d="M2.5 0L5 3H0Z" fill="#5470b8"/></svg>
<svg class="ab" style="left:793px;top:432px" width="5" height="3"><path d="M0 0H5L2.5 3Z" fill="#5470b8"/></svg>
<div class="l" style="left:715px;top:423px;">0,00</div>
<div class="nud" style="left:712px;top:446px;width:92px;height:20px;background:#fff"></div>
<div class="spin" style="left:788px;top:448px"></div>
<svg class="ab" style="left:792px;top:450px" width="5" height="3"><path d="M2.5 0L5 3H0Z" fill="#5470b8"/></svg>
<svg class="ab" style="left:792px;top:458px" width="5" height="3"><path d="M0 0H5L2.5 3Z" fill="#5470b8"/></svg>
<div class="l" style="left:714px;top:449px;">0,00</div>
<div class="btn" style="left:651px;top:480px;width:73px;height:21px"><div class="bi"></div></div>
<div class="l c" style="left:650px;top:484px;width:73px;transform:scaleX(0.935);">Применить</div>
<div class="btn" style="left:732px;top:480px;width:73px;height:21px"><div class="bi"></div></div>
<div class="l c" style="left:731px;top:484px;width:73px;transform:scaleX(0.935);">Создать</div>
<div class="btn" style="left:732px;top:506px;width:73px;height:21px"><div class="bi"></div></div>
<div class="l c" style="left:731px;top:510px;width:73px;transform:scaleX(0.935);">Удалить</div>
<svg class="ab" style="left:249px;top:564px" width="11" height="9"><path d="M0.6 8.6L4.4 0.4M5.6 8.6L9.4 0.4" stroke="#000" stroke-width="1.05" fill="none"/></svg>
<div class="ab" style="left:32px;top:584px;width:670px;height:1px;background:#d5dfe5"></div>
<div class="ab" style="left:32px;top:585px;width:669px;height:1px;background:#fff"></div>
<div class="ab" style="left:31px;top:585px;width:1px;height:133px;background:#d5dfe5"></div>
<div class="ab" style="left:32px;top:585px;width:1px;height:133px;background:#fff"></div>
<div class="ab" style="left:702px;top:585px;width:1px;height:133px;background:#d5dfe5"></div>
<div class="ab" style="left:701px;top:585px;width:1px;height:133px;background:#fff"></div>
<div class="ab" style="left:32px;top:718px;width:670px;height:1px;background:#d5dfe5"></div>
<div class="ab" style="left:32px;top:719px;width:670px;height:1px;background:#fff"></div>
<div class="ab" style="left:38px;top:584px;width:86px;height:2px;background:#f0f0f0"></div>
<div class="l" style="left:40px;top:578px;transform:scaleX(0.935);">Редактор карты</div>
<div class="l" style="left:46px;top:609px;transform:scaleX(0.935);">Тип местности</div>
<div class="l" style="left:46px;top:636px;transform:scaleX(0.935);">Уровень возвышенности</div>
<div class="l" style="left:46px;top:662px;transform:scaleX(0.935);">Объект</div>
<div class="l" style="left:46px;top:688px;transform:scaleX(0.935);">Размер кисти</div>
<div class="nud" style="left:190px;top:607px;width:36px;height:20px;background:#f0f0f0"></div>
<div class="spin" style="left:210px;top:609px"></div>
<svg class="ab" style="left:214px;top:611px" width="5" height="3"><path d="M2.5 0L5 3H0Z" fill="#5470b8"/></svg>
<svg class="ab" style="left:214px;top:619px" width="5" height="3"><path d="M0 0H5L2.5 3Z" fill="#5470b8"/></svg>
<div class="l" style="left:192px;top:610px;">00</div>
<div class="nud" style="left:190px;top:634px;width:36px;height:20px;background:#f0f0f0"></div>
<div class="spin" style="left:210px;top:636px"></div>
<svg class="ab" style="left:214px;top:638px" width="5" height="3"><path d="M2.5 0L5 3H0Z" fill="#5470b8"/></svg>
<svg class="ab" style="left:214px;top:646px" width="5" height="3"><path d="M0 0H5L2.5 3Z" fill="#5470b8"/></svg>
<div class="l" style="left:192px;top:637px;">0</div>
<div class="nud" style="left:190px;top:660px;width:36px;height:20px;background:#f0f0f0"></div>
<div class="spin" style="left:210px;top:662px"></div>
<svg class="ab" style="left:214px;top:664px" width="5" height="3"><path d="M2.5 0L5 3H0Z" fill="#5470b8"/></svg>
<svg class="ab" style="left:214px;top:672px" width="5" height="3"><path d="M0 0H5L2.5 3Z" fill="#5470b8"/></svg>
<div class="l" style="left:192px;top:663px;">00</div>
<div class="nud" style="left:190px;top:686px;width:36px;height:20px;background:#f0f0f0"></div>
<div class="spin" style="left:210px;top:688px"></div>
<svg class="ab" style="left:214px;top:690px" width="5" height="3"><path d="M2.5 0L5 3H0Z" fill="#5470b8"/></svg>
<svg class="ab" style="left:214px;top:698px" width="5" height="3"><path d="M0 0H5L2.5 3Z" fill="#5470b8"/></svg>
<div class="l" style="left:192px;top:689px;">0</div>
<div class="l" style="left:249px;top:609px;transform:scaleX(0.935);">Карта</div>
<div class="btn" style="left:319px;top:606px;width:92px;height:21px"><div class="bi"></div></div>
<svg class="ab" style="left:399px;top:615px" width="7" height="4"><path d="M0 0H7L3.5 4Z" fill="#000"/></svg>
<div class="l" style="left:323px;top:610px;">_main</div>
<div class="btn" style="left:249px;top:632px;width:73px;height:21px"><div class="bi"></div></div>
<div class="l c" style="left:248px;top:636px;width:73px;transform:scaleX(0.935);">Загрузить</div>
<div class="btn" style="left:337px;top:632px;width:73px;height:21px"><div class="bi"></div></div>
<div class="l c" style="left:336px;top:636px;width:73px;transform:scaleX(0.935);">Сохранить</div>
<div class="btn" style="left:337px;top:658px;width:73px;height:21px"><div class="bi"></div></div>
<div class="l c" style="left:336px;top:662px;width:73px;transform:scaleX(0.935);">Очистить</div>
<div class="btn" style="left:250px;top:684px;width:73px;height:21px"><div class="bi"></div></div>
<div class="l c" style="left:249px;top:688px;width:73px;">Save</div>
<div class="btn" style="left:337px;top:684px;width:73px;height:21px"><div class="bi"></div></div>
<div class="l c" style="left:336px;top:688px;width:73px;">Load</div>
<div class="l" style="left:432px;top:609px;transform:scaleX(0.935);">Номер региона</div>
<div class="l" style="left:432px;top:636px;transform:scaleX(0.935);">Тип региона</div>
<div class="btn" style="left:533px;top:606px;width:59px;height:21px"><div class="bi"></div></div>
<svg class="ab" style="left:580px;top:615px" width="7" height="4"><path d="M0 0H7L3.5 4Z" fill="#000"/></svg>
<div class="tb" style="left:533px;top:633px;width:59px;height:20px"></div>
<div class="btn" style="left:433px;top:658px;width:73px;height:21px"><div class="bi"></div></div>
<div class="l c" style="left:432px;top:662px;width:73px;transform:scaleX(0.935);">Применить</div>
<div class="btn" style="left:518px;top:658px;width:73px;height:21px"><div class="bi"></div></div>
<div class="l c" style="left:517px;top:662px;width:73px;transform:scaleX(0.935);">Создать</div>
<div class="btn" style="left:518px;top:684px;width:73px;height:21px"><div class="bi"></div></div>
<div class="l c" style="left:517px;top:688px;width:73px;transform:scaleX(0.935);">Удалить</div>
<div class="l" style="left:612px;top:609px;">Left</div>
<div class="l" style="left:612px;top:636px;">Up</div>
<div class="l" style="left:612px;top:662px;">Right</div>
<div class="l" style="left:612px;top:688px;">Down</div>
<div class="tb" style="left:650px;top:606px;width:36px;height:20px"></div>
<div class="tb" style="left:650px;top:633px;width:36px;height:20px"></div>
<div class="tb" style="left:650px;top:659px;width:36px;height:20px"></div>
<div class="tb" style="left:650px;top:685px;width:36px;height:20px"></div>
<div class="btn" style="left:743px;top:605px;width:73px;height:21px"><div class="bi"></div></div>
<div class="l c" style="left:742px;top:609px;width:73px;transform:scaleX(0.935);">Построить</div>
<div class="l" style="left:712px;top:636px;transform:scaleX(0.935);">Кол-во</div>
<div class="tb" style="left:758px;top:633px;width:59px;height:20px"></div>
<div class="l" style="left:712px;top:662px;">N</div>
<svg class="ab" style="left:760px;top:664px" width="11" height="9"><path d="M0.6 8.6L4.4 0.4M5.6 8.6L9.4 0.4" stroke="#000" stroke-width="1.05" fill="none"/></svg>
<div class="btn" style="left:743px;top:684px;width:73px;height:21px"><div class="bi"></div></div>
<div class="l c" style="left:742px;top:688px;width:73px;transform:scaleX(0.935);">Найти</div>
</body></html>
